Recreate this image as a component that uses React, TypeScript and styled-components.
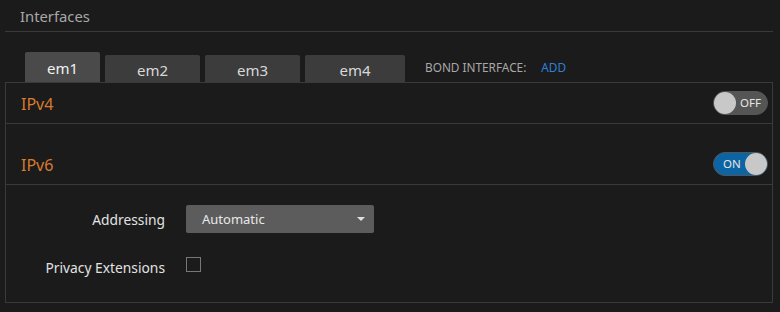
import React, { useState } from "react";
import styled, { createGlobalStyle } from "styled-components";

const Global = createGlobalStyle`
  html, body { margin: 0; padding: 0; background: #1b1b1b; }
  body { font-family: "Noto Sans", "Open Sans", sans-serif; color: #ddd; }
  * { box-sizing: border-box; }
`;

const Page = styled.div`
  width: 780px;
  height: 312px;
  padding: 0 7px 0 5px;
  background: #1b1b1b;
`;

const Header = styled.div`
  height: 32px;
  padding: 5px 0 0 15px;
  border-bottom: 1px solid #3a3a3a;
  font-size: 14.8px;
  color: #a8a8a8;
  line-height: 22px;
`;

const TabBar = styled.div`
  display: flex;
  align-items: flex-end;
  gap: 5px;
  height: 50px;
  padding-left: 20px;
`;

const Tab = styled.div<{ $active?: boolean; $w: number }>`
  width: ${(p) => p.$w}px;
  height: ${(p) => (p.$active ? 30 : 27)}px;
  background: ${(p) => (p.$active ? "#4a4a4a" : "#3c3c3c")};
  color: ${(p) => (p.$active ? "#f2f2f2" : "#d8d8d8")};
  border-radius: 2px 2px 0 0;
  font-size: 15px;
  display: flex;
  align-items: center;
  justify-content: center;
  padding-top: ${(p) => (p.$active ? 1 : 3)}px;
`;

const Bond = styled.div`
  align-self: center;
  margin-top: 19px;
  margin-left: 15px;
  display: flex;
  gap: 15px;
  font-size: 11.8px;
  color: #a8a8a8;
`;

const AddLink = styled.span`
  color: #2e80d8;
`;

const Panel = styled.div`
  border: 1px solid #3a3a3a;
  height: 221px;
`;

const Section = styled.div<{ $top?: number }>`
  margin-top: ${(p) => p.$top ?? 0}px;
  height: 41px;
  padding: 0 4px 1px 15px;
  border-bottom: 1px solid #3a3a3a;
  display: flex;
  align-items: center;
  justify-content: space-between;
`;

const SectionTitle = styled.div`
  font-size: 16px;
  color: #d97a2e;
  padding-top: 3px;
`;

const Track = styled.div<{ $on: boolean }>`
  width: 55px;
  height: 24px;
  border-radius: 12px;
  border: 1px solid #555;
  background: ${(p) => (p.$on ? "#0d64a3" : "#555")};
  display: flex;
  flex-direction: ${(p) => (p.$on ? "row" : "row-reverse")};
  align-items: center;
  justify-content: space-between;
  padding: ${(p) => (p.$on ? "0 0 0 9px" : "0 6px 0 0")};
  font-size: 11.5px;
  color: #e6e6e6;
  cursor: pointer;
`;

const Knob = styled.div`
  width: 22px;
  height: 22px;
  border-radius: 50%;
  background: #c8c8c8;
`;

const Form = styled.div`
  padding-top: 20px;
  display: grid;
  grid-template-columns: 159px 188px;
  column-gap: 21px;
  row-gap: 23px;
  align-items: center;
`;

const Label = styled.div<{ $shift?: number }>`
  font-size: 13.8px;
  color: #e2e2e2;
  text-align: right;
  padding-top: ${(p) => p.$shift ?? 0}px;
`;

const Select = styled.div`
  height: 28px;
  background: #5c5c5c;
  border-radius: 2px;
  padding: 0 9px 0 16px;
  display: flex;
  align-items: center;
  justify-content: space-between;
  font-size: 13px;
  color: #e8e8e8;
`;

const Caret = styled.span`
  width: 0;
  height: 0;
  border-left: 4px solid transparent;
  border-right: 4px solid transparent;
  border-top: 4px solid #e0e0e0;
`;

const Check = styled.div`
  width: 15px;
  height: 15px;
  border: 1px solid #777;
  margin-top: -5px;
`;

function Toggle({ on, onClick }: { on: boolean; onClick: () => void }) {
  return (
    <Track $on={on} onClick={onClick}>
      <span>{on ? "ON" : "OFF"}</span>
      <Knob />
    </Track>
  );
}

export default function App() {
  const [v4, setV4] = useState(false);
  const [v6, setV6] = useState(true);
  return (
    <Page>
      <Global />
      <Header>Interfaces</Header>
      <TabBar>
        <Tab $active $w={75}>em1</Tab>
        <Tab $w={95}>em2</Tab>
        <Tab $w={95}>em3</Tab>
        <Tab $w={100}>em4</Tab>
        <Bond>
          <span>BOND INTERFACE:</span>
          <AddLink>ADD</AddLink>
        </Bond>
      </TabBar>
      <Panel>
        <Section>
          <SectionTitle>IPv4</SectionTitle>
          <Toggle on={v4} onClick={() => setV4(!v4)} />
        </Section>
        <Section $top={20}>
          <SectionTitle>IPv6</SectionTitle>
          <Toggle on={v6} onClick={() => setV6(!v6)} />
        </Section>
        <Form>
          <Label>Addressing</Label>
          <Select>
            <span>Automatic</span>
            <Caret />
          </Select>
          <Label $shift={2}>Privacy Extensions</Label>
          <Check />
        </Form>
      </Panel>
    </Page>
  );
}
